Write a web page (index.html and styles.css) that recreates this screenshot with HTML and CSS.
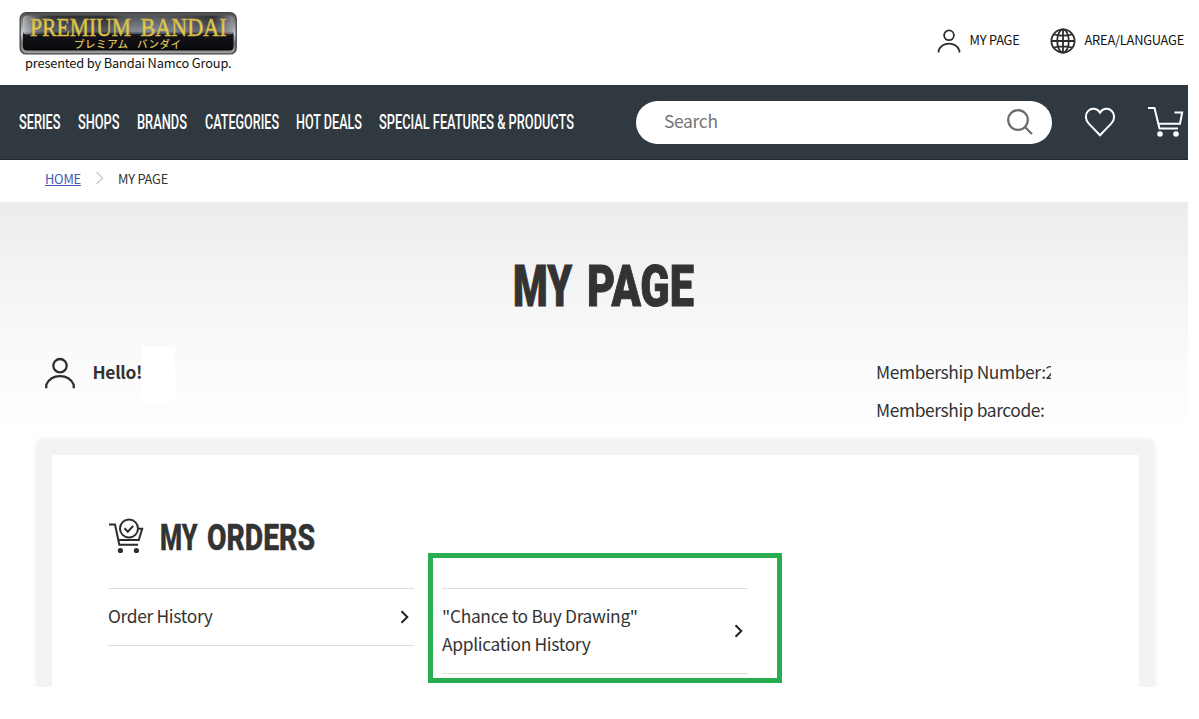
FILE: index.html
```html
<!DOCTYPE html>
<html lang="en">
<head>
  <meta charset="UTF-8">
  <meta name="viewport" content="width=device-width, initial-scale=1.0">
  <title>MY PAGE | PREMIUM BANDAI</title>
  <link rel="stylesheet" href="styles.css">
</head>
<body>
  <div class="page">
    <header class="header">
      <div class="brand">
        <svg class="logo" width="218" height="43" viewBox="0 0 218 43">
          <defs>
            <linearGradient id="frame" x1="0" y1="0" x2="0" y2="1">
              <stop offset="0" stop-color="#4b4c50"/>
              <stop offset=".5" stop-color="#d0d2d5"/>
              <stop offset=".75" stop-color="#6b6c6e"/>
              <stop offset="1" stop-color="#a2a3a5"/>
            </linearGradient>
            <linearGradient id="plate" x1="0" y1="0" x2="0" y2="1">
              <stop offset="0" stop-color="#3b3e45"/>
              <stop offset=".45" stop-color="#777f8e"/>
              <stop offset=".55" stop-color="#15151a"/>
              <stop offset="1" stop-color="#08080a"/>
            </linearGradient>
            <linearGradient id="shade">
              <stop offset="0" stop-color="#fff" stop-opacity=".55"/>
              <stop offset=".13" stop-color="#000" stop-opacity=".25"/>
              <stop offset=".4" stop-color="#000" stop-opacity=".3"/>
              <stop offset=".55" stop-color="#fff" stop-opacity=".1"/>
              <stop offset=".9" stop-color="#000" stop-opacity=".3"/>
              <stop offset="1" stop-color="#fff" stop-opacity=".35"/>
            </linearGradient>
            <linearGradient id="gold" x1="0" y1="0" x2="0" y2="1">
              <stop offset="0" stop-color="#c3a34e"/>
              <stop offset=".5" stop-color="#ecd348"/>
              <stop offset="1" stop-color="#d3a93e"/>
            </linearGradient>
          </defs>
          <rect x="1.200" y=".7" width="216" height="41.200" rx="6" fill="url(#frame)" stroke="#46484b" stroke-width="1.400"/>
          <rect x="4" y="3.500" width="210.500" height="35" rx="4" fill="url(#plate)"/>
          <rect x="4" y="3.500" width="210.500" height="19" rx="4" fill="url(#shade)"/>
          <text class="logo_name" x="11" y="24" textLength="101" lengthAdjust="spacingAndGlyphs">PREMIUM</text>
          <text class="logo_name" x="121.500" y="24" textLength="86" lengthAdjust="spacingAndGlyphs">BANDAI</text>
          <text class="logo_kana" x="55" y="35.500" textLength="54">プレミアム</text>
          <text class="logo_kana" x="118" y="35.500" textLength="44">バンダイ</text>
        </svg>
        <p class="presented">presented by Bandai Namco Group.</p>
      </div>
      <div class="utility">
        <a class="utility_link">
          <svg width="24" height="24" viewBox="0 0 24 24" class="line_icon">
            <circle cx="12" cy="6.300" r="4.900"/>
            <path d="M1.600 23.500v-2.200C3.600 17 7.500 14.700 12 14.700s8.400 2.300 10.400 6.600v2.200"/>
          </svg>
          <span>MY PAGE</span>
        </a>
        <a class="utility_link">
          <svg width="26" height="26" viewBox="0 0 26 26" class="line_icon">
            <circle cx="13" cy="13" r="11.600"/>
            <ellipse cx="13" cy="13" rx="5.800" ry="11.600"/>
            <path d="M13 1.400v23.200M1.400 13h23.200M4 6.500c5 1.300 13 1.300 18 0M4 19.500c5-1.300 13-1.300 18 0"/>
          </svg>
          <span>AREA/LANGUAGE</span>
        </a>
      </div>
    </header>

    <nav class="nav">
      <div class="menu">
        <svg width="42" height="24"><text x="0" y="19" textLength="41.500" lengthAdjust="spacingAndGlyphs">SERIES</text></svg>
        <svg width="42" height="24"><text x="0" y="19" textLength="41.500" lengthAdjust="spacingAndGlyphs">SHOPS</text></svg>
        <svg width="50" height="24"><text x="0" y="19" textLength="50" lengthAdjust="spacingAndGlyphs">BRANDS</text></svg>
        <svg width="74" height="24"><text x="0" y="19" textLength="74" lengthAdjust="spacingAndGlyphs">CATEGORIES</text></svg>
        <svg width="66" height="24"><text x="0" y="19" textLength="66" lengthAdjust="spacingAndGlyphs">HOT DEALS</text></svg>
        <svg width="195" height="24"><text x="0" y="19" textLength="195" lengthAdjust="spacingAndGlyphs">SPECIAL FEATURES &amp; PRODUCTS</text></svg>
      </div>
      <div class="search">
        <span>Search</span>
        <svg width="28" height="28" viewBox="0 0 28 28">
          <circle cx="12" cy="12" r="9.800"/>
          <path d="M19 19l7 7"/>
        </svg>
      </div>
      <svg class="heart" width="32" height="30" viewBox="0 0 32 30">
        <path d="M16 28.200L4.800 16.600C1 12.700 1 7 4.200 3.900 7.700.6 13 1.100 16 5.700c3-4.600 8.300-5.100 11.800-1.800C31 7 31 12.700 27.200 16.600z"/>
      </svg>
      <svg class="cart" width="38" height="32" viewBox="0 0 38 32">
        <path d="M0 2h6.500l5 20.500h18.500M10.500 17.800h21.500l2.200-11.300h-7.700"/>
        <circle cx="12" cy="28" r="2.800"/>
        <circle cx="28" cy="28" r="2.800"/>
      </svg>
    </nav>

    <div class="breadcrumb">
      <a href="#">HOME</a>
      <svg width="9" height="14" viewBox="0 0 9 14"><path d="M1.500 1l6 6-6 6"/></svg>
      <span>MY PAGE</span>
    </div>

    <main class="main">
      <h1 class="title">
        <svg width="180" height="60">
          <text x="-1" y="50.500" textLength="59" lengthAdjust="spacingAndGlyphs">MY</text>
          <text x="73" y="50.500" textLength="107" lengthAdjust="spacingAndGlyphs">PAGE</text>
        </svg>
      </h1>
      <div class="member">
        <div class="hello">
          <svg width="32" height="32" viewBox="0 0 24 24" class="line_icon">
            <circle cx="12" cy="6.500" r="5"/>
            <path d="M1.700 23.500v-2.700C3.700 16.500 7.500 14.400 12 14.400s8.300 2.100 10.300 6.400v2.700"/>
          </svg>
          <strong>Hello!</strong>
          <span class="name_mask"></span>
        </div>
        <div class="membership">
          <p>Membership Number:<span class="number">2</span></p>
          <p>Membership barcode:</p>
        </div>
      </div>

      <section class="card">
        <h2 class="card_title">
          <svg width="37" height="36" viewBox="0 0 37 36" class="order_icon">
            <path d="M1 6.500h6l4.300 20.200h18.700M10.300 22h20.500l3.400-11.300h-3.500"/>
            <circle cx="21" cy="10.500" r="9"/>
            <path d="M16.500 10.300l3.300 3.400 5.400-5.800"/>
            <circle class="wheel" cx="12.400" cy="32.500" r="2.600"/>
            <circle class="wheel" cx="28.400" cy="32.500" r="2.600"/>
          </svg>
          <svg width="156" height="44">
            <text x="0" y="36" textLength="37.500" lengthAdjust="spacingAndGlyphs">MY</text>
            <text x="47" y="36" textLength="108" lengthAdjust="spacingAndGlyphs">ORDERS</text>
          </svg>
        </h2>
        <div class="links">
          <a class="link">
            <span class="link_text">Order History</span>
            <svg width="10" height="14" viewBox="0 0 10 14"><path d="M1.500 1.300L7.300 7l-5.800 5.700"/></svg>
          </a>
          <a class="link marked">
            <span class="link_text">"Chance to Buy Drawing"<br>Application History</span>
            <svg width="10" height="14" viewBox="0 0 10 14"><path d="M1.500 1.300L7.300 7l-5.800 5.700"/></svg>
          </a>
        </div>
      </section>
    </main>
  </div>
</body>
</html>
```
FILE: styles.css
```css
*, *::after {
  box-sizing: border-box;
}
body {
  margin: 0;
  background-color: #fff;
  color: #333;
  font-family: 'Noto Sans CJK JP', sans-serif;
}
p, h1, h2 {
  margin: 0;
}
svg {
  display: block;
  flex: none;
  overflow: visible;
}
.page {
  width: 1188px;
  height: 687px;
  overflow: hidden;
}
.line_icon {
  fill: none;
  stroke: #2d2d2d;
  stroke-width: 1.800;
}

/* header */
.header {
  display: flex;
  justify-content: space-between;
  height: 85px;
  padding: 12px 4px 0 19px;
}
.logo_name {
  font-family: 'Liberation Serif', serif;
  font-size: 25px;
  fill: url(#gold);
  stroke: #d9bb45;
  stroke-width: 0.500;
}
.logo_kana {
  font-size: 10.500px;
  font-weight: 500;
  fill: #dcc05c;
}
.presented {
  padding-left: 6px;
  color: #111;
  font-size: 12.800px;
  letter-spacing: -0.150px;
  line-height: 16px;
}
.utility {
  display: flex;
  align-items: center;
  gap: 30px;
  height: 58px;
  color: #111;
  font-size: 12.800px;
  letter-spacing: -0.200px;
}
.utility_link {
  display: flex;
  align-items: center;
  gap: 9px;
}
.utility_link span {
  padding-bottom: 3px;
}

/* navigation */
.nav {
  display: flex;
  align-items: center;
  height: 75px;
  padding-left: 19px;
  border-bottom: 1px solid #22282e;
  background-color: #303940;
}
.menu {
  display: flex;
  gap: 17.200px;
  width: 617px;
}
.menu text {
  fill: #fff;
  font-family: Roboto, sans-serif;
  font-size: 19.500px;
  font-weight: 500;
}
.search {
  display: flex;
  align-items: center;
  justify-content: space-between;
  width: 416px;
  height: 43px;
  padding: 0 18px 0 28px;
  border-radius: 22px;
  background-color: #fff;
  color: #757575;
  font-size: 17.400px;
  letter-spacing: -0.300px;
}
.search span {
  padding-bottom: 3px;
}
.search svg {
  fill: none;
  stroke: #6b6b6b;
  stroke-width: 2.200;
}
.heart {
  margin-left: 32px;
  fill: none;
  stroke: #fff;
  stroke-width: 2;
}
.cart {
  margin-left: 32px;
  fill: none;
  stroke: #fff;
  stroke-width: 2;
}
.cart circle {
  fill: #fff;
  stroke: none;
}

.breadcrumb {
  display: flex;
  align-items: center;
  gap: 14px;
  height: 42px;
  padding: 0 0 6px 45px;
  font-size: 12.800px;
  letter-spacing: -0.200px;
}
.breadcrumb a {
  color: #3f58b8;
}
.breadcrumb svg {
  fill: none;
  stroke: #ccc;
  stroke-width: 1.500;
}

/* my page */
.main {
  height: 485px;
  padding: 53px 35px 0 38px;
  background-image: linear-gradient(#ebecec 0, #f0f1f1 50px, #f9f9f9 140px, #fff 235px);
}
.title svg {
  margin: 0 auto;
  position: relative;
  left: 8px;
}
.title text {
  fill: #333;
  stroke: #333;
  stroke-width: 1;
  font-family: Roboto, sans-serif;
  font-size: 58px;
  font-weight: 900;
}
.member {
  display: flex;
  justify-content: space-between;
  height: 126px;
  padding: 31px 102px 0 6px;
}
.hello {
  display: flex;
  align-items: center;
  height: 57px;
  font-size: 17.400px;
  letter-spacing: -0.300px;
}
.hello strong {
  margin-left: 16.500px;
  padding-bottom: 6px;
}
.hello .line_icon {
  margin-bottom: 4px;
  stroke-width: 1.700;
}
.name_mask {
  width: 33px;
  height: 56px;
  background-color: #fff;
}
.membership {
  width: 175px;
  padding-top: 7px;
  font-size: 17.400px;
  letter-spacing: -0.400px;
  line-height: 38px;
  white-space: nowrap;
}
.number {
  display: inline-block;
  width: 5px;
  height: 38px;
  overflow: hidden;
  vertical-align: top;
}
.card {
  height: 270px;
  padding: 59px 56px 0;
  border: 14px solid #f3f3f3;
  background-color: #fff;
  box-shadow: 0 0 6px rgba(0, 0, 0, 0.120);
}
.card_title {
  display: flex;
  align-items: center;
  gap: 15px;
}
.order_icon {
  fill: none;
  stroke: #2d2d2d;
  stroke-width: 2;
}
.order_icon .wheel {
  fill: #2d2d2d;
  stroke: none;
}
.card_title text {
  fill: #333;
  stroke: #333;
  stroke-width: 0.500;
  font-family: Roboto, sans-serif;
  font-size: 37px;
  font-weight: 800;
}
.links {
  display: flex;
  align-items: flex-start;
  gap: 28px;
  padding-top: 30px;
}
.link {
  display: flex;
  position: relative;
  align-items: center;
  justify-content: space-between;
  width: 306px;
  padding: 14px 4px 14px 0;
  border-top: 1px solid #ddd;
  border-bottom: 1px solid #ddd;
  font-size: 17.400px;
  letter-spacing: -0.330px;
  line-height: 28px;
}
.link_text {
  margin: -1px 0 1px;
}
.link svg {
  fill: none;
  stroke: #222;
  stroke-width: 2;
}
/* highlight frame over the drawing link */
.marked::after {
  content: '';
  position: absolute;
  top: -36px;
  left: -14px;
  width: 354px;
  height: 130px;
  border: 5px solid #28ad50;
}
```
